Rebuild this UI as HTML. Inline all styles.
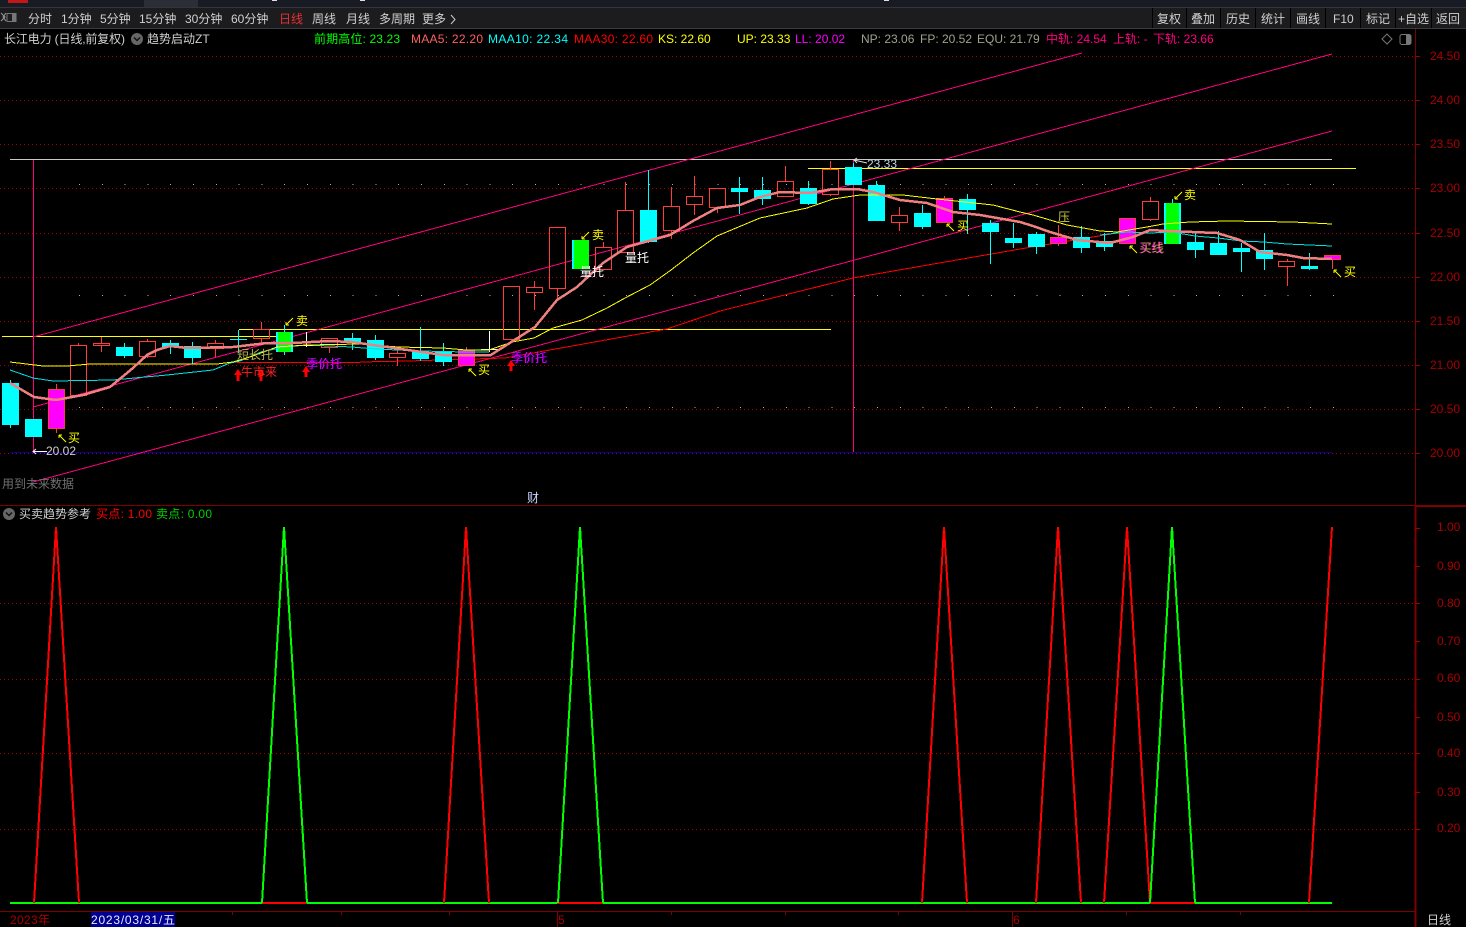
<!DOCTYPE html>
<html><head><meta charset="utf-8"><title>长江电力</title>
<style>
html,body{margin:0;padding:0;background:#000;width:1466px;height:927px;overflow:hidden}
svg{display:block}
text{font-family:"Liberation Sans","Noto Sans CJK SC",sans-serif;font-size:12px;white-space:pre}
.g{stroke:#a80000;stroke-width:1;stroke-dasharray:1 3;fill:none}
.t{fill:#d0d0d0}
.s{fill:#a80000}
.w{fill:#fff}
.y{fill:#ffff00}
.c path{shape-rendering:crispEdges}
</style></head><body>
<svg width="1466" height="927" viewBox="0 0 1466 927" xmlns="http://www.w3.org/2000/svg">
<rect width="1466" height="927" fill="#000"/>
<!-- top chrome -->
<rect width="1466" height="7" fill="#181b24"/>
<rect x="8" y="0" width="20" height="3" fill="#c01818"/>
<rect x="144" y="0" width="54" height="7" fill="#2b2e37"/>
<rect x="272" y="0" width="5" height="1" fill="#ddd"/><rect x="360" y="0" width="5" height="1" fill="#ddd"/><rect x="884" y="0" width="5" height="1" fill="#ddd"/>
<rect y="7" width="1466" height="1" fill="#33353b"/>
<rect y="8" width="1466" height="20" fill="#1c1c1e"/>
<rect y="28" width="1466" height="1" fill="#3a3a3a"/>
<path d="M1 13l4 4-4 4M6 13l-3 4 3 4" stroke="#999" fill="none"/><rect x="7" y="13.500" width="9" height="8" fill="none" stroke="#777"/><rect x="12" y="14" width="4" height="7" fill="#777"/>
<g class="t">
<text x="28" y="23">分时</text><text x="61" y="23">1分钟</text><text x="100" y="23">5分钟</text><text x="139" y="23">15分钟</text><text x="185" y="23">30分钟</text><text x="231" y="23">60分钟</text>
<text x="279" y="23" style="fill:#e83030">日线</text><text x="312" y="23">周线</text><text x="346" y="23">月线</text><text x="379" y="23">多周期</text><text x="422" y="23">更多</text>
<path d="M451 15l4 4.500-4 4.500" stroke="#ccc" fill="none"/>
<text x="1157" y="23">复权</text><text x="1191" y="23">叠加</text><text x="1226" y="23">历史</text><text x="1261" y="23">统计</text><text x="1296" y="23">画线</text><text x="1333" y="23">F10</text><text x="1366" y="23">标记</text><text x="1398" y="23">+自选</text><text x="1436" y="23">返回</text>
</g>
<path d="M1152.500 8V28M1186.500 8V28M1220.500 8V28M1255.500 8V28M1290.500 8V28M1325.500 8V28M1360.500 8V28M1395.500 8V28M1431.500 8V28" stroke="#000"/>

<!-- header -->
<text x="4" y="43" class="t" textLength="121">长江电力 (日线,前复权)</text>
<circle cx="137" cy="39" r="6" fill="#666"/><path d="M134 37.500l3 3 3-3" stroke="#111" stroke-width="1.500" fill="none"/>
<text x="147" y="43" class="t">趋势启动ZT</text>
<text x="314" y="43" fill="#00ff00" textLength="86">前期高位: 23.23</text>
<text x="411" y="43" fill="#ff6060" textLength="72">MAA5: 22.20</text>
<text x="488" y="43" fill="#00ffff" textLength="80">MAA10: 22.34</text>
<text x="574" y="43" fill="#ff0000" textLength="79">MAA30: 22.60</text>
<text x="658" y="43" fill="#ffff00">KS: 22.60</text>
<text x="737" y="43" fill="#ffff00">UP: 23.33</text>
<text x="795" y="43" fill="#ff00ff">LL: 20.02</text>
<text x="861" y="43" fill="#a0a090">NP: 23.06</text>
<text x="920" y="43" fill="#a0a090">FP: 20.52</text>
<text x="977" y="43" fill="#a0a090">EQU: 21.79</text>
<text x="1046" y="43" fill="#ff0080">中轨: 24.54</text>
<text x="1113" y="43" fill="#ff0080">上轨: -</text>
<text x="1153" y="43" fill="#ff0080">下轨: 23.66</text>
<path d="M1387 34l5 5-5 5-5-5z" fill="none" stroke="#777"/>
<rect x="1400" y="34.500" width="11" height="10" rx="2" fill="none" stroke="#777"/><rect x="1406" y="35" width="5" height="9" fill="#777"/>

<!-- grid -->
<path class="g" d="M0 56.500H1415M0 100.500H1415M0 144.500H1415M0 188.500H1415M0 233.500H1415M0 277.500H1415M0 321.500H1415M0 365.500H1415M0 409.500H1415M0 453.500H1415"/>
<path class="g" d="M0 603.500H1415M0 679.500H1415M0 753.500H1415M0 829.500H1415"/>

<g class="c">
<!-- axes -->
<path d="M1415.500 29V505" stroke="#800000"/>
<path d="M0 505.500H1466" stroke="#800000"/>
<path d="M1415.500 505V927" stroke="#800000" stroke-width="2"/>
<path d="M1415 506H1466" stroke="#800000" stroke-width="2"/>
<path d="M0 911.500H1415" stroke="#800000"/>
<path d="M1415 56.500h5M1415 100.500h5M1415 144.500h5M1415 188.500h5M1415 233.500h5M1415 277.500h5M1415 321.500h5M1415 365.500h5M1415 409.500h5M1415 453.500h5M1415 528.500h5M1415 566.500h5M1415 603.500h5M1415 641.500h5M1415 679.500h5M1415 717.500h5M1415 753.500h5M1415 792.500h5M1415 829.500h5" stroke="#a00000"/>
</g>
<g class="s">
<text x="1430" y="60">24.50</text><text x="1430" y="104">24.00</text><text x="1430" y="148">23.50</text><text x="1430" y="192">23.00</text><text x="1430" y="237">22.50</text><text x="1430" y="281">22.00</text><text x="1430" y="325">21.50</text><text x="1430" y="369">21.00</text><text x="1430" y="413">20.50</text><text x="1430" y="457">20.00</text>
<text x="1437" y="531">1.00</text><text x="1437" y="570">0.90</text><text x="1437" y="607">0.80</text><text x="1437" y="645">0.70</text><text x="1437" y="682">0.60</text><text x="1437" y="721">0.50</text><text x="1437" y="757">0.40</text><text x="1437" y="796">0.30</text><text x="1437" y="832">0.20</text>
</g>
<g class="c">
<!-- dots -->
<path stroke="#ddd" stroke-width="1" fill="none" stroke-dasharray="1 21.800" d="M79 407.500H1340M79 295.500H1340M79 184.500H1340" opacity=".8"/>

<!-- horizontal levels -->
<path d="M10 159.500H1332" stroke="#c8c8c8"/>
<path d="M808 168.500H1356" stroke="#ffff00"/>
<path d="M2 336.500H285" stroke="#ffff00"/>
<path d="M239 329.500H831" stroke="#ffff00"/>
<path d="M10 452.500H1332" stroke="#0000a0"/>
<path d="M237 362.500H360" stroke="#ff0000"/>
<!-- verticals -->
<path d="M33.500 160V452M853.500 160V452" stroke="#ff0080"/>
<!-- channels -->
<path d="M33 337L1082 53M33 407L1332 54M33 482L1332 131" stroke="#ff0080" fill="none"/>
<path d="M360 362L408 361L505 358L667 329L720 311L853 278L1020 249L1117 233" stroke="#ff0000" fill="none"/>

<!-- cyan wicks -->
<path stroke="#00ffff" fill="none" d="M10.500 380V428M124.500 343V358M170.500 340V354M192.500 342V364M238.500 330V353M375.500 335V360M420.500 327V361M443.500 343V366M648.500 170V243M739.500 177V214M762.500 177V205M808.500 181V205M853.500 163V168M876.500 181V186M922.500 205V229M967.500 194V234M990.500 220V264M1013.500 223V248M1036.500 232V254M1081.500 226V253M1104.500 233V251M1195.500 232V258M1218.500 231V255M1241.500 243V272M1264.500 233V270M1309.500 253V270M352.500 333V350M284.500 325V355M1172.500 199V204"/>
<path stroke="#fff" fill="none" d="M306.500 332V347M298 345.500H315M489.500 331V352M481 349.500H498"/>
</g>
<!-- cyan bodies -->
<g fill="#00ffff" shape-rendering="crispEdges">
<rect x="2" y="383" width="17" height="42"/><rect x="25" y="419" width="17" height="18"/><rect x="116" y="347" width="17" height="9"/><rect x="162" y="343" width="17" height="4"/><rect x="184" y="346" width="17" height="12"/><rect x="230" y="339" width="17" height="1"/><rect x="344" y="338" width="17" height="4"/><rect x="367" y="340" width="17" height="18"/><rect x="412" y="352" width="17" height="7"/><rect x="435" y="352" width="17" height="10"/><rect x="640" y="210" width="17" height="32"/><rect x="731" y="188" width="17" height="4"/><rect x="754" y="190" width="17" height="9"/><rect x="800" y="188" width="17" height="16"/><rect x="845" y="167" width="17" height="18"/><rect x="868" y="185" width="17" height="36"/><rect x="914" y="213" width="17" height="14"/><rect x="959" y="199" width="17" height="11"/><rect x="982" y="223" width="17" height="9"/><rect x="1005" y="238" width="17" height="5"/><rect x="1028" y="234" width="17" height="13"/><rect x="1073" y="237" width="17" height="11"/><rect x="1096" y="241" width="17" height="6"/><rect x="1187" y="242" width="17" height="8"/><rect x="1210" y="243" width="17" height="12"/><rect x="1233" y="248" width="17" height="4"/><rect x="1256" y="250" width="17" height="9"/><rect x="1301" y="266" width="17" height="3"/>
<!-- green w/ cyan sides -->
<rect x="276" y="332" width="17" height="20"/><rect x="572" y="240" width="17" height="29"/><rect x="1164" y="203" width="17" height="41"/>
<rect x="278" y="332" width="13" height="20" fill="#00ff00"/><rect x="574" y="240" width="15" height="29" fill="#00ff00"/><rect x="1166" y="203" width="13" height="41" fill="#00ff00"/>
</g>
<g class="c">
<!-- hollow red -->
<path stroke="#ff3c3c" fill="none" d="M70.500 345.500h16v50h-16zM78.500 343v2M78.500 396v1
M93.500 343.500h16v2h-16zM101.500 337v6M101.500 346v6
M139.500 341.500h16v15h-16zM147.500 339v2M147.500 357v1
M207.500 343.500h16v5h-16zM215.500 340v3M215.500 349v8
M253.500 329.500h16v9h-16zM261.500 322v7M261.500 339v4
M321.500 338.500h16v9h-16zM329.500 348v5
M389.500 353.500h16v4h-16zM397.500 350v3M397.500 358v8
M503.500 286.500h16v53h-16z
M526.500 287.500h16v5h-16zM534.500 281v6M534.500 293v17
M549.500 227.500h16v61h-16zM557.500 289v11
M595.500 247.500h16v22h-16zM603.500 242v5
M617.500 210.500h16v42h-16zM625.500 182v28
M663.500 206.500h16v24h-16zM671.500 187v19M671.500 231v8
M686.500 196.500h16v8h-16zM694.500 176v20M694.500 205v10
M709.500 188.500h16v19h-16zM717.500 208v5
M777.500 181.500h16v15h-16zM785.500 166v15
M822.500 169.500h16v25h-16zM830.500 161v8M830.500 195v1
M891.500 215.500h16v7h-16zM899.500 207v8M899.500 223v8
M1142.500 201.500h16v18h-16zM1150.500 197v4M1150.500 220v1
M1278.500 261.500h16v5h-16zM1287.500 259v2M1287.500 267v19"/>
<!-- magenta wicks -->
<path stroke="#ff3c3c" fill="none" d="M56.500 384v5M56.500 429v4M466.500 347v3M466.500 365v1M944.500 196v2M1058.500 225v12M1058.500 243v3M1332.500 260v9"/>
</g>
<g fill="#ff00ff" stroke="#ff3c3c" shape-rendering="crispEdges">
<rect x="48.500" y="389.500" width="16" height="39"/><rect x="458.500" y="350.500" width="16" height="15"/><rect x="936.500" y="198.500" width="16" height="24"/><rect x="1050.500" y="237.500" width="16" height="6"/><rect x="1119.500" y="218.500" width="16" height="25"/><rect x="1324.500" y="255.500" width="16" height="4"/>
</g>

<g class="c">
<!-- MA lines -->
<path fill="none" stroke="#00e0e0" d="M10 370L33 378L53 381L113 380L167 375L213 370L230 363L240 361L261 352L284 347L307 345L352 347L375 349L420 351L466 352L489 352M1100 235L1127 232L1150 233L1172 232L1195 236L1218 238L1241 241L1264 242L1287 244L1332 246"/>
<path fill="none" stroke="#ffff00" d="M10 362L43 366L67 366L90 364L217 364L233 362L250 357L277 347L307 345L360 344L398 347L443 348L466 350L489 350L512 342L534 338L553 328L582 320L607 308L625 298L650 285L671 270L693 253L717 236L760 218L807 208L833 199L860 195L903 195L937 199L993 205L1020 212L1033 215L1067 225L1100 231L1117 232L1147 227L1163 224L1190 222L1227 221L1293 222L1332 224"/>
<path fill="none" stroke="#f08080" stroke-width="2.500" d="M10 383L34 397L56 400L83 395L110 387L133 368L147 355L157 350L170 346L187 348L233 347L267 343L293 343L329 341L352 342L387 347L443 355L490 355.500L535 327L557 300L577 287L603 263L627 247L670 235L693 221L717 208L740 205L760 197L780 192L810 193L833 189L857 189L873 192L900 200L927 203L953 212L980 215L1020 222L1033 226L1050 232L1077 240L1110 243L1133 237L1150 230L1167 231L1217 233L1240 240L1260 252L1287 255L1303 258L1332 259"/>
</g>

<!-- red up arrows -->
<g fill="#ff0000">
<path d="M238 369l4 6h-2.500v6h-3v-6h-2.500z"/><path d="M261 369l4 6h-2.500v6h-3v-6h-2.500z"/><path d="M306 366l4 6h-2.500v5h-3v-5h-2.500z"/><path d="M511 360l4 6h-2.500v5h-3v-5h-2.500z"/>
</g>
<!-- yellow arrows -->
<g stroke="#ffff00" fill="none">
<path d="M66 442l-7-7M59 435v3M59 435h3"/>
<path d="M476 376l-7-7M469 369v3M469 369h3"/>
<path d="M954 231l-7-7M947 224v3M947 224h3"/>
<path d="M1341 277l-7-7M1334 270v3M1334 270h3"/>
<path d="M1137 253l-7-7M1130 246v3M1130 246h3"/>
<path d="M293 318l-7 7M286 325v-3M286 325h3"/>
<path d="M589 232l-7 7M582 239v-3M582 239h3"/>
<path d="M1182 192l-7 7M1175 199v-3M1175 199h3"/>
</g>
<!-- chart labels -->
<g class="y">
<text x="68" y="442">买</text><text x="478" y="374">买</text><text x="957" y="230">买</text><text x="1344" y="276">买</text>
<text x="296" y="325">卖</text><text x="592" y="239">卖</text><text x="1184" y="199">卖</text>
<text x="1058" y="221" style="fill:#c8c840">压</text>
<text x="237" y="359" style="fill:#b8b850">短长托</text>
<text x="1139" y="252" style="fill:#ff00ff">买线</text><text x="1140" y="252" style="fill:#d8d830" opacity=".7">买线</text>
</g>
<text x="241" y="376" fill="#ff2020">牛市来</text>
<text x="306" y="368" fill="#ff00ff">季价托</text><text x="307" y="368" fill="#5000ff" opacity=".45">季价托</text>
<text x="511" y="362" fill="#ff00ff">季价托</text><text x="512" y="362" fill="#5000ff" opacity=".45">季价托</text>
<text x="580" y="276" class="w">量托</text><text x="625" y="262" class="w">量托</text>
<path d="M47 451.500H33m3-2.500l-3 2.500 3 2.500" stroke="#fff" fill="none"/>
<text x="46" y="455" class="t">20.02</text>
<path d="M867 163l-13-3m3 3l-3-3 3-2" stroke="#ddd" fill="none"/>
<text x="867" y="168" fill="#c0d0e0">23.33</text>
<text x="2" y="488" fill="#707070">用到未来数据</text>
<text x="527" y="502" fill="#ccd4ff">财</text>

<!-- lower panel header -->
<circle cx="9" cy="514" r="6" fill="#666"/><path d="M6 512.500l3 3 3-3" stroke="#111" stroke-width="1.500" fill="none"/>
<text x="19" y="518" class="t">买卖趋势参考</text>
<text x="96" y="518" fill="#ff0000" textLength="56">买点: 1.00</text>
<text x="156" y="518" fill="#00d000" textLength="56">卖点: 0.00</text>

<g class="c">
<!-- indicator -->
<path d="M10 903H1332" stroke="#00ff00" stroke-width="2" fill="none"/>
<path d="M262 903H307M557 903H603M1150 903H1195" stroke="#ff0000" stroke-width="2" fill="none"/>
<path fill="none" stroke-width="2" stroke="#ff0000" d="M34 903L56 527L79 903M444 903L466 527L489 903M922 903L944 527L967 903M1036 903L1058 527L1081 903M1104 903L1127 527L1150 903M1309 903L1332 527"/>
<path fill="none" stroke-width="2" stroke="#00ff00" d="M262 903L284 527L307 903M558 903L580 527L603 903M1150 903L1172 527L1195 903"/>
<!-- bottom axis ticks -->
<path d="M232.500 912v3M341.500 912v3M449.500 912v3M671.500 912v3M785.500 912v3M898.500 912v3M1126.500 912v3M1240.500 912v3" stroke="#800000"/>
<path d="M557.500 912v15M1012.500 912v15" stroke="#800000"/>
</g>

<!-- bottom axis -->
<text x="10" y="924" fill="#a80000" textLength="40">2023年</text>
<rect x="91" y="912" width="84" height="15" fill="#000090"/>
<text x="91" y="924" fill="#e8e8ff" textLength="84">2023/03/31/五</text>
<text x="558" y="924" fill="#a80000">5</text><text x="1013" y="924" fill="#a80000">6</text>
<text x="1427" y="924" class="t">日线</text>
</svg>
</body></html>
